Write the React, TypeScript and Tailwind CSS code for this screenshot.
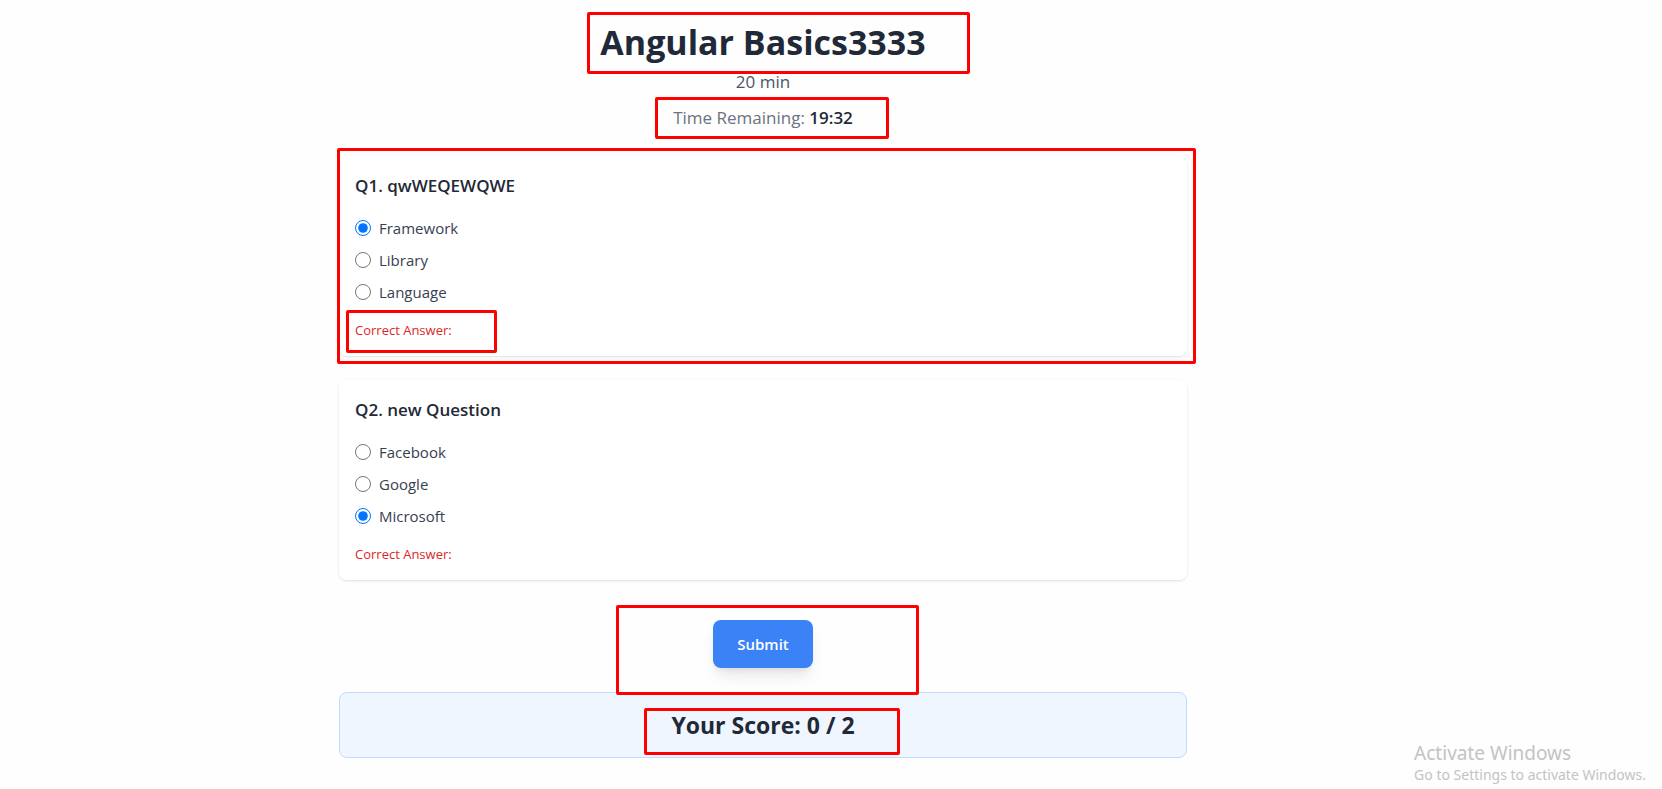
import { useState } from "react";

type Question = { id: number; text: string; options: string[]; initial: string; marked: boolean };

const questions: Question[] = [
  { id: 1, text: "qwWEQEWQWE", options: ["Framework", "Library", "Language"], initial: "Framework", marked: true },
  { id: 2, text: "new Question", options: ["Facebook", "Google", "Microsoft"], initial: "Microsoft", marked: false },
];

function Mark({ className }: { className: string }) {
  return (
    <span
      aria-hidden="true"
      className={`pointer-events-none absolute rounded-[2px] border-3 border-[#ff0000] ${className}`}
    />
  );
}

function QuestionCard({ question }: { question: Question }) {
  const [answer, setAnswer] = useState(question.initial);
  return (
    <fieldset className="relative min-w-0 rounded-lg bg-white p-4 shadow-sm">
      <h2 className="mb-4 text-[17px] leading-7 font-semibold text-[#1f2937]">
        Q{question.id}. {question.text}
      </h2>
      <div className="flex flex-col gap-2">
        {question.options.map((option) => (
          <label key={option} className="flex items-center gap-2 text-[15px] leading-6 text-[#374151]">
            <input
              type="radio"
              name={`question-${question.id}`}
              value={option}
              checked={answer === option}
              onChange={() => setAnswer(option)}
              className="size-4"
            />
            {option}
          </label>
        ))}
      </div>
      <p className="relative mt-4 text-[13px] leading-5 text-[#dc2626]">
        Correct Answer:
        {question.marked && <Mark className="-top-[10px] -left-[9px] h-[43px] w-[151px]" />}
      </p>
      {question.marked && <Mark className="-top-2 -right-[9px] -bottom-2 -left-[2px]" />}
    </fieldset>
  );
}

export default function App() {
  return (
    <div className="relative min-h-screen bg-[#fefefe] font-['Open_Sans','Noto_Sans',sans-serif] lg:pr-[136px]">
      <main className="mx-auto max-w-4xl p-6">
        <header className="mb-6 text-center">
          <h1 className="relative text-[34px] leading-9 font-bold text-[#1f2937]">
            Angular Basics3333
            <Mark className="-top-3 left-1/2 -ml-[176px] h-[62px] w-[383px]" />
          </h1>
          <p className="mt-2 text-[17px] leading-7 text-[#4b5563]">20 min</p>
          <p className="relative mt-2 text-[17px] leading-7 text-[#6b7280]">
            Time Remaining: <span className="font-semibold text-[#1f2937]">19:32</span>
            <Mark className="-top-[7px] left-1/2 -ml-[108px] h-[42px] w-[234px]" />
          </p>
        </header>

        <form onSubmit={(event) => event.preventDefault()}>
          <div className="flex flex-col gap-6">
            {questions.map((question) => (
              <QuestionCard key={question.id} question={question} />
            ))}
          </div>
          <div className="relative z-10 mt-10 text-center">
            <button
              type="submit"
              className="rounded-lg bg-[#3b82f6] px-6 py-3 text-[15px] leading-6 font-semibold text-white shadow-lg"
            >
              Submit
            </button>
            <Mark className="-top-[15px] left-1/2 -ml-[147px] h-[90px] w-[303px]" />
          </div>
        </form>

        <section className="relative mt-6 rounded-lg border border-[#bfdbfe] bg-[#eff6ff] p-4 text-center">
          <h2 className="text-[23px] leading-8 font-bold text-[#1f2937]">Your Score: 0 / 2</h2>
          <Mark className="top-[15px] left-1/2 -ml-[119px] h-[47px] w-[256px]" />
        </section>
      </main>

      <aside className="absolute right-4 bottom-1 font-['Noto_Sans',sans-serif] text-[#c3c3c3]">
        <p className="text-[19px] leading-6">Activate Windows</p>
        <p className="text-[14px] leading-5">Go to Settings to activate Windows.</p>
      </aside>
    </div>
  );
}
